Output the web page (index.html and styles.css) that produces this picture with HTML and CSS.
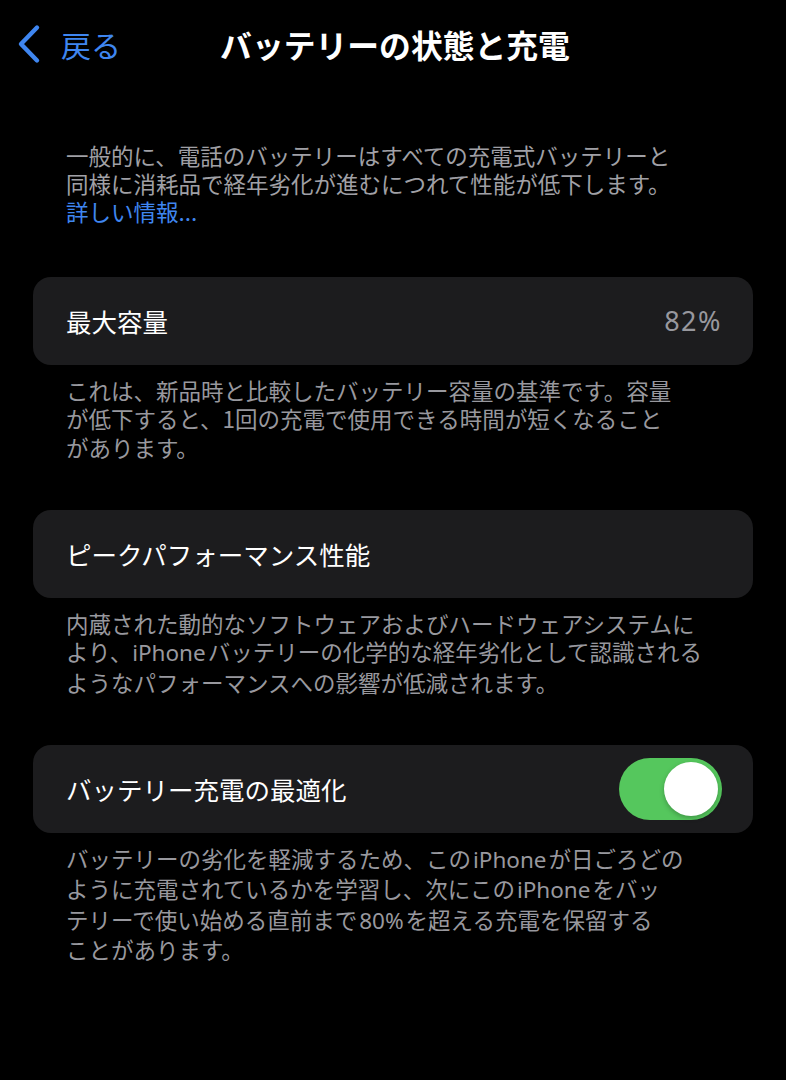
FILE: index.html
```html
<!DOCTYPE html>
<html lang="ja">
<head>
<meta charset="utf-8">
<title>バッテリーの状態と充電</title>
<link rel="stylesheet" href="styles.css">
</head>
<body>
<div class="screen">
  <header class="navbar">
    <div class="back">
      <svg class="chevron" width="28" height="40" viewBox="0 0 28 40"><path d="M22 3.5 L6 20 L22 36.5" fill="none" stroke="currentColor" stroke-width="4.4" stroke-linecap="round" stroke-linejoin="round"/></svg>
      <span class="back-label">戻る</span>
    </div>
    <h1 class="title">バッテリーの状態と充電</h1>
  </header>

  <p class="intro">一般的に、電話のバッテリーはすべての充電式バッテリーと<br>同様に消耗品で経年劣化が進むにつれて性能が低下します。<br><span class="link">詳しい情報...</span></p>

  <section class="group first">
    <div class="cell">
      <span class="cell-label">最大容量</span>
      <span class="cell-value">82%</span>
    </div>
  </section>
  <p class="footer">これは、新品時と比較したバッテリー容量の基準です。容量<br>が低下すると、1回の充電で使用できる時間が短くなること<br>があります。</p>

  <section class="group">
    <div class="cell">
      <span class="cell-label">ピークパフォーマンス性能</span>
    </div>
  </section>
  <p class="footer">内蔵された動的なソフトウェアおよびハードウェアシステムに<br>より、<span class="latin nl">iPhone</span>バッテリーの化学的な経年劣化として認識される<br>ようなパフォーマンスへの影響が低減されます。</p>

  <section class="group">
    <div class="cell">
      <span class="cell-label">バッテリー充電の最適化</span>
      <span class="switch on"><span class="knob"></span></span>
    </div>
  </section>
  <p class="footer">バッテリーの劣化を軽減するため、この<span class="latin">iPhone</span>が日ごろどの<br>ように充電されているかを学習し、次にこの<span class="latin">iPhone</span>をバッ<br>テリーで使い始める直前まで<span class="latin">80%</span>を超える充電を保留する<br>ことがあります。</p>
</div>
</body>
</html>
```

FILE: styles.css
```css
* { box-sizing: border-box; }
html, body {
  margin: 0;
  padding: 0;
  background: #000;
}
body {
  font-family: "Noto Sans CJK JP", "Noto Sans", "Liberation Sans", sans-serif;
  color: #fff;
  width: 786px;
  height: 1080px;
  overflow: hidden;
}
.screen {
  display: flex;
  flex-direction: column;
}
.navbar {
  position: relative;
  height: 88px;
  display: flex;
  align-items: center;
  justify-content: center;
}
.back {
  position: absolute;
  left: 15px;
  top: 24px;
  display: flex;
  align-items: center;
  gap: 18px;
  color: #3f86f0;
}
.chevron { display: block; }
.back-label {
  font-size: 30px;
  line-height: 40px;
}
.title {
  margin: 0 0 0 4px;
  font-size: 31.8px;
  font-weight: 700;
  line-height: 40px;
  color: #fff;
}
.intro {
  margin: 53px 0 0 0;
  padding-left: 66px;
  font-size: 22.5px;
  line-height: 28px;
  color: #a0a0a6;
  white-space: nowrap;
}
.link { color: #3f86f0; }
.group {
  margin: 0 33px;
  background: #1c1c1e;
  border-radius: 18px;
}
.group.first { margin-top: 52px; }
.footer + .group { margin-top: 49px; }
.cell {
  height: 87.5px;
  display: flex;
  align-items: center;
  justify-content: space-between;
  padding: 0 32px 0 33px;
}
.cell-label {
  font-size: 25.5px;
  color: #fff;
}
.cell-value {
  font-size: 27px;
  letter-spacing: 1.5px;
  margin-right: -1px;
  color: #98989e;
  font-family: "Noto Sans", "Noto Sans CJK JP", sans-serif;
}
.footer {
  margin: 11px 0 0 0;
  padding-left: 66px;
  font-size: 22.5px;
  line-height: 28.5px;
  color: #98989e;
  white-space: nowrap;
}
.latin {
  font-family: "Noto Sans", "Noto Sans CJK JP", sans-serif;
  margin: 0 2px;
}
.latin.nl { margin-left: 0; }
.switch {
  width: 103px;
  height: 62px;
  border-radius: 31px;
  background: #55c75d;
  position: relative;
  margin-right: -1px;
}
.knob {
  position: absolute;
  right: 4px;
  top: 4px;
  width: 54px;
  height: 54px;
  border-radius: 50%;
  background: #fff;
  box-shadow: 0 2px 5px rgba(0,0,0,0.25);
}
```
